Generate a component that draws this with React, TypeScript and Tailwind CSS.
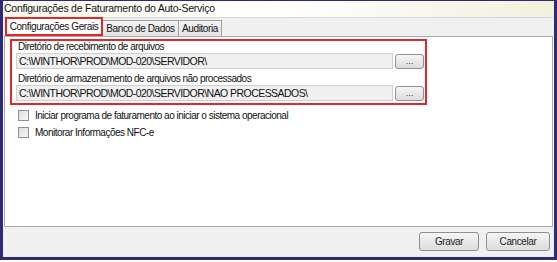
const font = { fontFamily: '"Liberation Sans", Arial, sans-serif' };

function Btn({ label, w }: { label: string; w: string }) {
  return (
    <div
      className={`${w} h-[19px] flex items-center justify-center rounded-[3px] border border-[#8e8f8f] bg-gradient-to-b from-[#f6f6f6] to-[#dcdcdc] text-[10px] tracking-[-0.4px] text-[#222]`}
    >
      {label}
    </div>
  );
}

function PathRow({ label, value }: { label: string; value: string }) {
  return (
    <div className="flex flex-col">
      <div className="h-[12px] pl-[6px] text-[10px] leading-[12px] tracking-[-0.5px] text-[#111] whitespace-nowrap">
        {label}
      </div>
      <div className="flex items-center gap-[2px] pl-[4px]">
        <div className="w-[377px] h-[16px] border border-[#cfcfcf] bg-[#f0f0f0] pl-[2px] text-[10.5px] leading-[14px] tracking-[-0.55px] text-[#111] whitespace-nowrap">
          {value}
        </div>
        <div className="w-[29px] h-[15px] flex items-center justify-center rounded-[3px] border border-[#8e8f8f] bg-gradient-to-b from-[#f6f6f6] to-[#dcdcdc] text-[9px] leading-[9px] text-[#333]">
          ...
        </div>
      </div>
    </div>
  );
}

function Check({ label }: { label: string }) {
  return (
    <div className="flex items-center gap-[6px] h-[17px]">
      <div className="w-[11px] h-[11px] border border-[#8f8f8f] bg-gradient-to-br from-[#dedede] to-[#f8f8f8]" />
      <span className="text-[10px] tracking-[-0.5px] text-[#111] whitespace-nowrap">{label}</span>
    </div>
  );
}

export default function App() {
  return (
    <div className="w-[557px] h-[262px] bg-white" style={font}>
      <div className="w-[557px] h-[260px] flex flex-col border-t border-x-[3px] border-b-[3px] border-[#2e2a78]">
        {/* título */}
        <div className="h-[16px] flex items-center pl-[1px] bg-gradient-to-r from-[#fbfaf0] via-[#ffffff] to-[#f3f0dc] text-[10.5px] tracking-[-0.25px] text-[#111] whitespace-nowrap">
          Configurações de Faturamento do Auto-Serviço
        </div>

        {/* abas */}
        <div className="h-[19px] bg-[#f0f0f0] flex items-end pl-[2px] border-t border-[#d8d8d8]">
          <div className="h-[19px] w-[98px] flex items-center justify-center border-2 border-[#e02828] bg-white text-[10px] tracking-[-0.4px] text-[#111] whitespace-nowrap">
            Configurações Gerais
          </div>
          <div className="h-[16px] w-[76px] flex items-center justify-center border border-[#a0a0a0] border-l-0 border-b-0 bg-gradient-to-b from-[#f4f4f4] to-[#e4e4e4] text-[10px] tracking-[-0.4px] text-[#111] whitespace-nowrap">
            Banco de Dados
          </div>
          <div className="h-[16px] w-[43px] flex items-center justify-center border border-[#a0a0a0] border-l-0 border-b-0 bg-gradient-to-b from-[#f4f4f4] to-[#e4e4e4] text-[10px] tracking-[-0.4px] text-[#111] whitespace-nowrap">
            Auditoria
          </div>
        </div>

        {/* painel */}
        <div className="h-[191px] mx-[1px] border border-[#a8a8a8] bg-white flex flex-col pt-[2px] pl-[5px]">
          <div className="w-[417px] border-2 border-[#e02828] flex flex-col gap-[4px] pb-[2px]">
            <PathRow label="Diretório de recebimento de arquivos" value="C:\WINTHOR\PROD\MOD-020\SERVIDOR\" />
            <PathRow
              label="Diretório de armazenamento de arquivos não processados"
              value="C:\WINTHOR\PROD\MOD-020\SERVIDOR\NAO PROCESSADOS\"
            />
          </div>
          <div className="flex flex-col pl-[8px] pt-[2px]">
            <Check label="Iniciar programa de faturamento ao iniciar o sistema operacional" />
            <Check label="Monitorar Informações NFC-e" />
          </div>
        </div>

        {/* rodapé */}
        <div className="flex-1 bg-[#f0f0f0] flex items-center justify-end gap-[7px] pr-[4px] pb-[1px]">
          <Btn label="Gravar" w="w-[60px]" />
          <Btn label="Cancelar" w="w-[64px]" />
        </div>
      </div>
    </div>
  );
}
